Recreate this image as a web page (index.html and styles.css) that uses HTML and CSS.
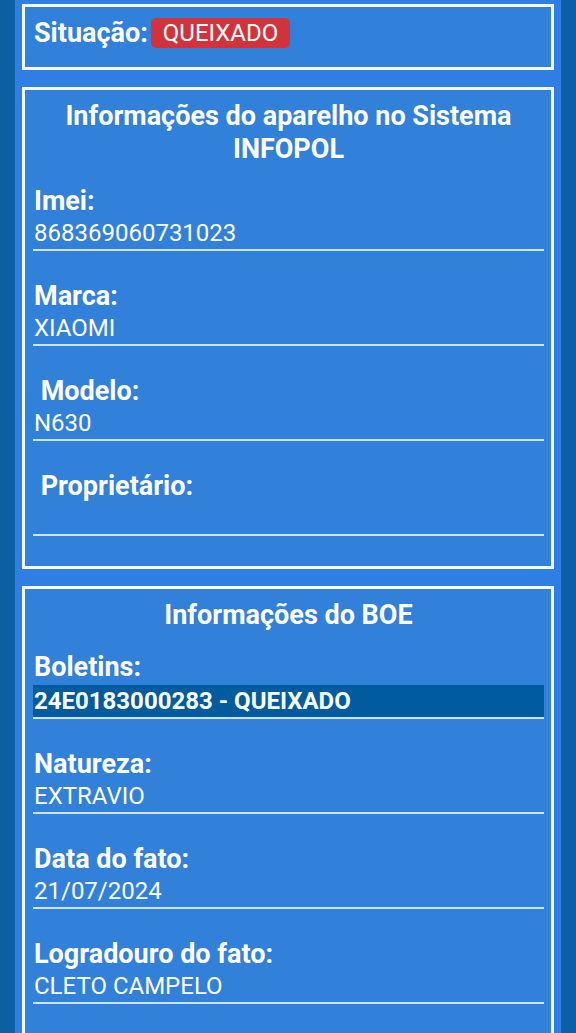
FILE: index.html
```html
<!DOCTYPE html>
<html lang="pt-BR">
<head>
    <meta charset="UTF-8">
    <title>Consulta de aparelho</title>
    <link rel="stylesheet" href="styles.css">
</head>
<body>
    <div class="page">

        <div class="card status-card">
            <span class="status-label">Situação:</span>
            <span class="badge">QUEIXADO</span>
        </div>

        <div class="card">
            <h2 class="card-title">Informações do aparelho no Sistema INFOPOL</h2>

            <div class="field">
                <div class="field-label">Imei:</div>
                <div class="field-value">868369060731023</div>
            </div>

            <div class="field">
                <div class="field-label">Marca:</div>
                <div class="field-value">XIAOMI</div>
            </div>

            <div class="field">
                <div class="field-label">&nbsp;Modelo:</div>
                <div class="field-value">N630</div>
            </div>

            <div class="field">
                <div class="field-label">&nbsp;Proprietário:</div>
                <div class="field-value"></div>
            </div>
        </div>

        <div class="card">
            <h2 class="card-title">Informações do BOE</h2>

            <div class="field">
                <div class="field-label">Boletins:</div>
                <div class="field-value selected">24E0183000283 - QUEIXADO</div>
            </div>

            <div class="field">
                <div class="field-label">Natureza:</div>
                <div class="field-value">EXTRAVIO</div>
            </div>

            <div class="field">
                <div class="field-label">Data do fato:</div>
                <div class="field-value">21/07/2024</div>
            </div>

            <div class="field">
                <div class="field-label">Logradouro do fato:</div>
                <div class="field-value">CLETO CAMPELO</div>
            </div>
        </div>

    </div>
</body>
</html>
```

FILE: styles.css
```css
html, body {
    height: 100%;
}

body {
    margin: 0;
    font-family: Roboto, "Liberation Sans", Arial, sans-serif;
    background-color: #0b5fa2;
    color: #ffffff;
}

.page {
    margin: 0 15px;
    min-height: 100%;
    padding: 4px 7px 0 7px;
    background-color: #2f7ee3;
    box-sizing: border-box;
}

.card {
    border: 3px solid #f4f8ff;
    background-color: #3180d9;
    padding: 10px 7px 30px 8px;
    margin-bottom: 17px;
}

.status-card {
    display: flex;
    align-items: center;
    padding-top: 11px;
    padding-bottom: 19px;
}

.status-label {
    font-size: 27px;
    font-weight: bold;
    line-height: 30px;
    padding-left: 1px;
}

.badge {
    margin-left: 3px;
    padding: 0 12px;
    font-size: 24px;
    line-height: 30px;
    background-color: #d2333b;
    border-radius: 5px;
}

.card-title {
    margin: 0 0 19px 0;
    font-size: 27px;
    font-weight: bold;
    line-height: 33px;
    text-align: center;
}

.field {
    margin-top: 29px;
}

.card-title + .field {
    margin-top: 0;
}

.field-label {
    font-size: 27px;
    font-weight: bold;
    line-height: 32px;
    padding-left: 1px;
}

.field-value {
    font-size: 24px;
    line-height: 32px;
    height: 32px;
    border-bottom: 2px solid #cfe3fa;
    padding-left: 1px;
}

.field-value.selected {
    margin-top: 2px;
    background-color: #005c9f;
    font-weight: bold;
}
```
